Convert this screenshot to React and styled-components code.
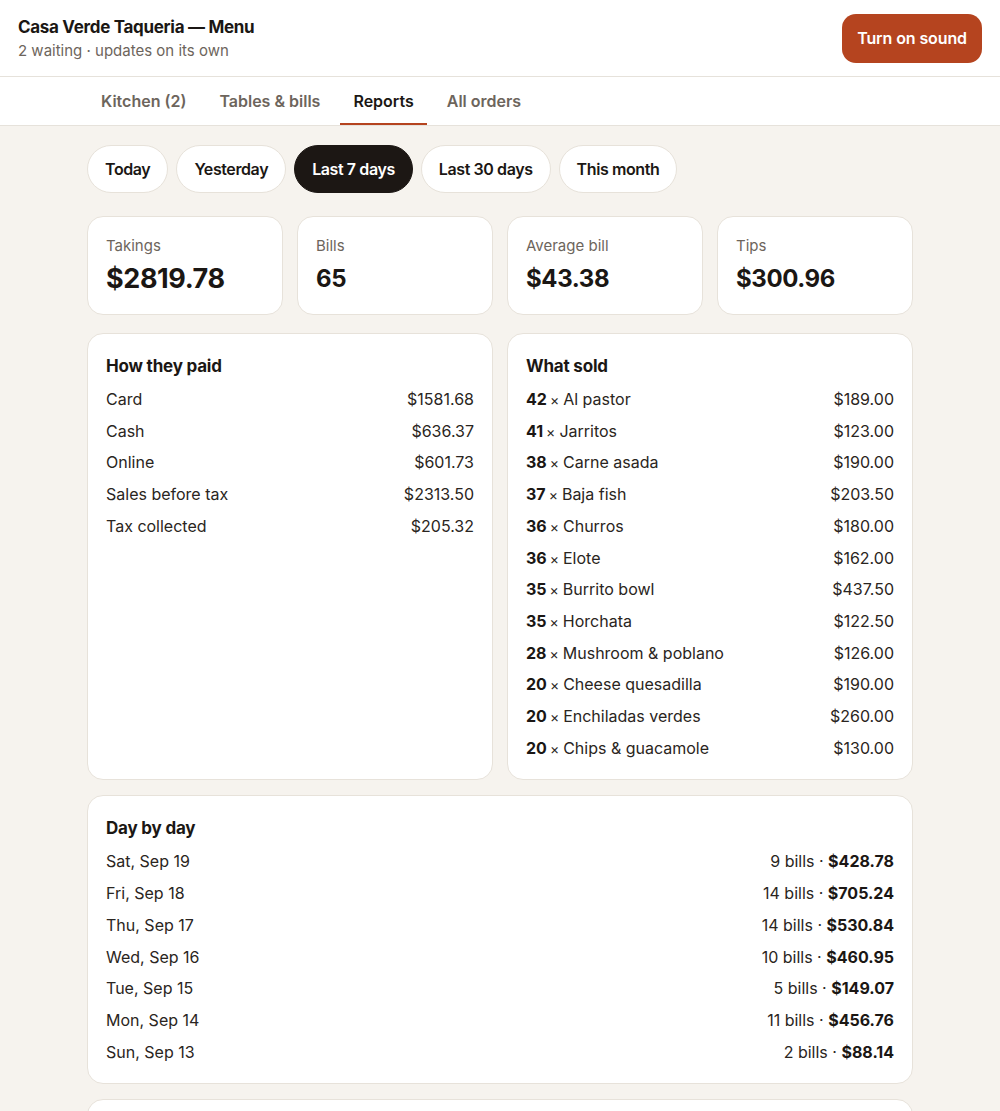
import React from "react";
import styled, { createGlobalStyle } from "styled-components";

const GlobalStyle = createGlobalStyle`
  html, body {
    margin: 0;
    padding: 0;
    background: #f6f3ee;
    font-family: Inter, "Noto Sans", sans-serif;
    color: #1b1714;
  }
  * { box-sizing: border-box; }
`;

const ranges = ["Today", "Yesterday", "Last 7 days", "Last 30 days", "This month"];

const stats = [
  { label: "Takings", value: "$2819.78" },
  { label: "Bills", value: "65" },
  { label: "Average bill", value: "$43.38" },
  { label: "Tips", value: "$300.96" },
];

const payments = [
  ["Card", "$1581.68"],
  ["Cash", "$636.37"],
  ["Online", "$601.73"],
  ["Sales before tax", "$2313.50"],
  ["Tax collected", "$205.32"],
];

const sold = [
  [42, "Al pastor", "$189.00"],
  [41, "Jarritos", "$123.00"],
  [38, "Carne asada", "$190.00"],
  [37, "Baja fish", "$203.50"],
  [36, "Churros", "$180.00"],
  [36, "Elote", "$162.00"],
  [35, "Burrito bowl", "$437.50"],
  [35, "Horchata", "$122.50"],
  [28, "Mushroom & poblano", "$126.00"],
  [20, "Cheese quesadilla", "$190.00"],
  [20, "Enchiladas verdes", "$260.00"],
  [20, "Chips & guacamole", "$130.00"],
];

const days = [
  ["Sat, Sep 19", 9, "$428.78"],
  ["Fri, Sep 18", 14, "$705.24"],
  ["Thu, Sep 17", 14, "$530.84"],
  ["Wed, Sep 16", 10, "$460.95"],
  ["Tue, Sep 15", 5, "$149.07"],
  ["Mon, Sep 14", 11, "$456.76"],
  ["Sun, Sep 13", 2, "$88.14"],
];

const Header = styled.header`
  display: flex;
  align-items: center;
  justify-content: space-between;
  height: 77px;
  padding: 0 18px;
  background: #fff;
  border-bottom: 1px solid #e6e2db;
`;

const Title = styled.h1`
  margin: 0;
  font-size: 17px;
  font-weight: 700;
  letter-spacing: -0.3px;
  line-height: 22px;
`;

const Sub = styled.div`
  margin-top: 3px;
  font-size: 15px;
  color: #6d655c;
  line-height: 20px;
`;

const SoundButton = styled.button`
  height: 49px;
  padding: 0 15px;
  border: none;
  border-radius: 14px;
  background: #b5441f;
  color: #fff;
  font: inherit;
  font-size: 16px;
  font-weight: 600;
  letter-spacing: -0.1px;
`;

const Nav = styled.nav`
  background: #fff;
  border-bottom: 1px solid #e6e2db;
`;

const NavInner = styled.div`
  width: 824px;
  margin: 0 auto;
  display: flex;
  gap: 7px;
`;

const Tab = styled.div`
  height: 48px;
  display: flex;
  align-items: center;
  padding: 2px 13px 0;
  font-size: 16px;
  font-weight: 600;
  color: ${(p) => (p.$active ? "#1b1714" : "#6d655c")};
  border-bottom: 2px solid ${(p) => (p.$active ? "#b5441f" : "transparent")};
`;

const Main = styled.main`
  width: 826px;
  margin: 0 auto;
  padding: 19px 0 0;
  display: flex;
  flex-direction: column;
  gap: 15px;
`;

const Pills = styled.div`
  display: flex;
  gap: 8px;
  margin-bottom: 8px;
`;

const Pill = styled.button`
  height: 48px;
  padding: 0 17px;
  border-radius: 999px;
  border: 1px solid ${(p) => (p.$active ? "#1c1714" : "#e7e2da")};
  background: ${(p) => (p.$active ? "#1c1714" : "#fff")};
  color: ${(p) => (p.$active ? "#fff" : "#1b1714")};
  font: inherit;
  font-size: 16px;
  font-weight: 600;
  letter-spacing: -0.4px;
`;

const StatGrid = styled.div`
  display: grid;
  grid-template-columns: repeat(4, 1fr);
  gap: 14px;
  margin-bottom: 3px;
`;

const Card = styled.section`
  background: #fff;
  border: 1px solid #e7e2da;
  border-radius: 16px;
  padding: ${(p) => p.$pad || "20px 18px 15px"};
  min-height: ${(p) => p.$minHeight || "0"};
`;

const StatLabel = styled.div`
  font-size: 15px;
  color: #6d655c;
  line-height: 20px;
`;

const StatValue = styled.div`
  margin-top: 6px;
  font-size: ${(p) => (p.$big ? "27px" : "24px")};
  font-weight: 700;
  letter-spacing: -0.4px;
  line-height: 34px;
`;

const Columns = styled.div`
  display: grid;
  grid-template-columns: 1fr 1fr;
  gap: 14px;
  align-items: stretch;
`;

const PanelTitle = styled.h2`
  margin: 0 0 6px;
  font-size: 17px;
  font-weight: 700;
  letter-spacing: -0.2px;
  line-height: 24px;
`;

const Row = styled.div`
  display: flex;
  justify-content: space-between;
  align-items: center;
  font-size: 16px;
  line-height: 23.7px;
  padding: 4px 0;
  color: #2a2521;
`;

const Strong = styled.b`
  font-weight: 700;
  color: #1b1714;
`;

const Mul = styled.span`
  font-size: 14px;
  margin: 0 4px 0 3px;
`;

export default function App() {
  return (
    <>
      <GlobalStyle />
      <Header>
        <div>
          <Title>Casa Verde Taqueria — Menu</Title>
          <Sub>2 waiting · updates on its own</Sub>
        </div>
        <SoundButton>Turn on sound</SoundButton>
      </Header>
      <Nav>
        <NavInner>
          <Tab>Kitchen (2)</Tab>
          <Tab>Tables &amp; bills</Tab>
          <Tab $active>Reports</Tab>
          <Tab>All orders</Tab>
        </NavInner>
      </Nav>
      <Main>
        <Pills>
          {ranges.map((r) => (
            <Pill key={r} $active={r === "Last 7 days"}>
              {r}
            </Pill>
          ))}
        </Pills>
        <StatGrid>
          {stats.map((s, i) => (
            <Card key={s.label} $pad="19px 18px 18px">
              <StatLabel>{s.label}</StatLabel>
              <StatValue $big={i === 0}>{s.value}</StatValue>
            </Card>
          ))}
        </StatGrid>
        <Columns>
          <Card>
            <PanelTitle>How they paid</PanelTitle>
            {payments.map(([k, v]) => (
              <Row key={k}>
                <span>{k}</span>
                <span>{v}</span>
              </Row>
            ))}
          </Card>
          <Card>
            <PanelTitle>What sold</PanelTitle>
            {sold.map(([n, name, v]) => (
              <Row key={name}>
                <span>
                  <Strong>{n}</Strong>
                  <Mul>×</Mul>
                  {name}
                </span>
                <span>{v}</span>
              </Row>
            ))}
          </Card>
        </Columns>
        <Card>
          <PanelTitle>Day by day</PanelTitle>
          {days.map(([d, b, v]) => (
            <Row key={d}>
              <span>{d}</span>
              <span>
                {b} bills · <Strong>{v}</Strong>
              </span>
            </Row>
          ))}
        </Card>
        <Card $minHeight="60px" />
      </Main>
    </>
  );
}
